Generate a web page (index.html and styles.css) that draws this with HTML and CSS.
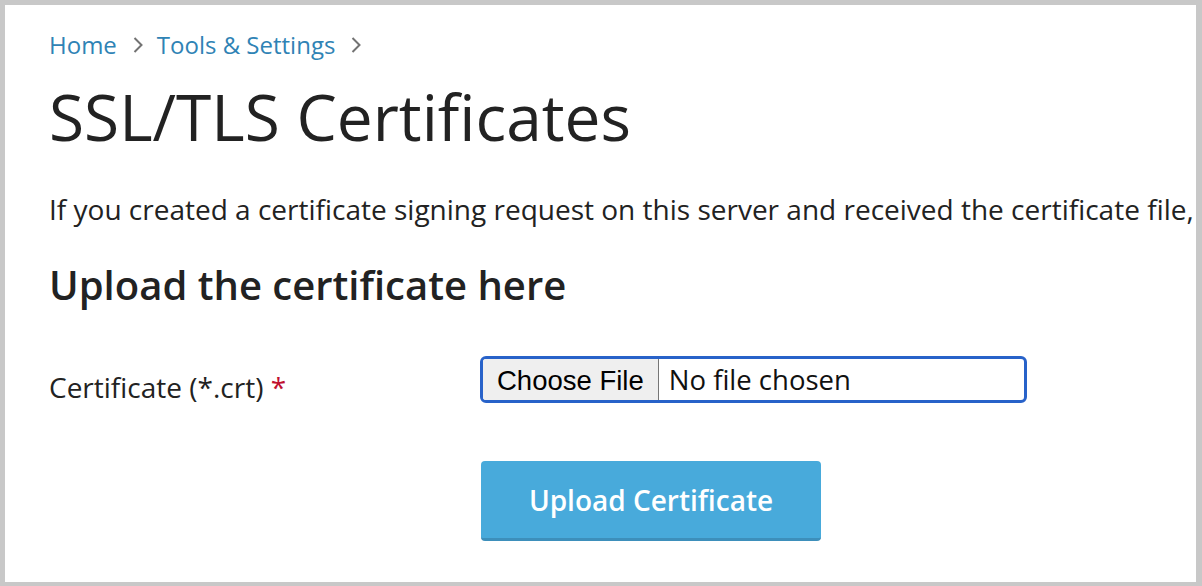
FILE: index.html
```html
<!DOCTYPE html>
<html lang="en">
<head>
    <meta charset="UTF-8">
    <meta name="viewport" content="width=device-width, initial-scale=1.0">
    <title>SSL/TLS Certificates</title>
    <link rel="stylesheet" href="styles.css">
</head>
<body>
    <div class="frame">
        <!-- Breadcrumbs -->
        <nav class="breadcrumbs">
            <a href="#">Home</a>
            <span class="sep"><svg width="10" height="16" viewBox="0 0 10 16"><path d="M1.5 1 L8.5 8 L1.5 15" /></svg></span>
            <a href="#">Tools &amp; Settings</a>
            <span class="sep"><svg width="10" height="16" viewBox="0 0 10 16"><path d="M1.5 1 L8.5 8 L1.5 15" /></svg></span>
        </nav>

        <h1>SSL/TLS Certificates</h1>
        <p class="hint">If you created a certificate signing request on this server and received the certificate file,</p>

        <h2>Upload the certificate here</h2>

        <form class="upload-form" onsubmit="return false">
            <div class="form-row">
                <label class="form-label">Certificate (*.crt) <span class="required">*</span></label>
                <div class="file-input">
                    <span class="file-btn">Choose File</span>
                    <span class="file-name">No file chosen</span>
                </div>
            </div>
            <div class="form-actions">
                <button class="btn" type="submit">Upload Certificate</button>
            </div>
        </form>
    </div>
</body>
</html>
```

FILE: styles.css
```css
* {
    margin: 0;
    padding: 0;
    box-sizing: border-box;
}

body {
    background-color: #c8c8c8;
    font-family: "Open Sans", "Noto Sans", sans-serif;
    color: #222;
}

.frame {
    height: 586px;
    background: #fff;
    border-style: solid;
    border-color: #c8c8c8;
    border-width: 5px 6px 4px 5px;
    padding: 22px 0 0 44px;
    overflow: hidden;
}

/* Breadcrumbs */
.breadcrumbs {
    display: flex;
    align-items: center;
    font-size: 24px;
    line-height: 36px;
}

.breadcrumbs a {
    color: #2f83b5;
    text-decoration: none;
}

.breadcrumbs .sep {
    display: flex;
    margin: 0 14px 0 16px;
}

.breadcrumbs .sep path {
    fill: none;
    stroke: #737373;
    stroke-width: 2;
}

h1 {
    font-size: 64px;
    font-weight: 400;
    line-height: 77px;
    margin-top: 15px;
}

.hint {
    font-size: 28px;
    line-height: 40px;
    margin-top: 34px;
    white-space: nowrap;
}

h2 {
    font-size: 40px;
    font-weight: 600;
    line-height: 52px;
    margin-top: 30px;
}

/* Form */
.upload-form {
    margin-top: 45px;
}

.form-row {
    display: flex;
    align-items: flex-start;
}

.form-label {
    width: 431px;
    font-size: 28px;
    line-height: 40px;
    padding-top: 11px;
}

.required {
    color: #c0102f;
}

.file-input {
    display: flex;
    width: 547px;
    height: 47px;
    border: 3px solid #2862c9;
    border-radius: 6px;
    overflow: hidden;
}

.file-btn {
    display: flex;
    align-items: center;
    padding: 2px 14px 0;
    background: #efefef;
    border-right: 1px solid #767676;
    font-family: "Liberation Sans", Arial, sans-serif;
    font-size: 27.5px;
    color: #000;
}

.file-name {
    display: flex;
    align-items: center;
    padding-left: 10px;
    font-size: 27.5px;
    color: #111;
}

.form-actions {
    margin-top: 54px;
    padding-left: 432px;
}

.btn {
    width: 340px;
    height: 80px;
    background-color: #48aadb;
    border: none;
    border-bottom: 3px solid #3d8fbb;
    border-radius: 4px;
    color: #fff;
    font-family: "Open Sans", sans-serif;
    font-size: 28px;
    font-weight: 600;
    cursor: pointer;
}
```
